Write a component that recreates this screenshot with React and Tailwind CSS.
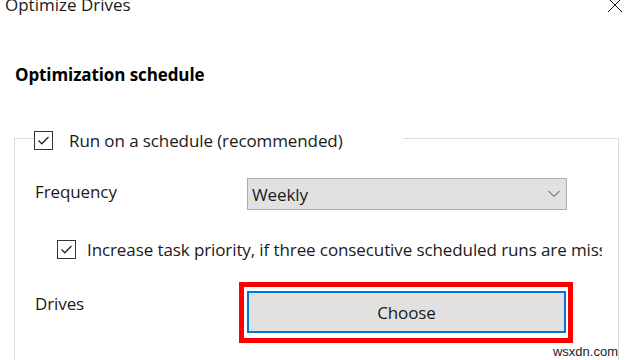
import React from "react";

function CheckBox() {
  return (
    <span className="w-[19px] h-[19px] border border-[#333333] bg-white flex items-center justify-center shrink-0">
      <svg width="15" height="15" viewBox="0 0 15 15" fill="none">
        <path d="M2.5 7.5 L5.8 10.8 L12.5 4" stroke="#222" strokeWidth="1.3" />
      </svg>
    </span>
  );
}

export default function App() {
  return (
    <div
      className="w-[629px] h-[360px] bg-white overflow-hidden relative text-[#1a1a1a]"
      style={{ fontFamily: '"Open Sans", "Noto Sans", sans-serif' }}
    >
      <div className="flex justify-between items-start h-[16px]">
        <span className="ml-[5px] -mt-[7px] text-[17px] leading-[23px]">Optimize Drives</span>
        <svg className="mr-[6px] -mt-[3px]" width="16" height="16" viewBox="0 0 16 16" fill="none">
          <path d="M1 1 L15 15 M15 1 L1 15" stroke="#111" strokeWidth="1" />
        </svg>
      </div>

      <h2 className="ml-[15px] mt-[47px] text-[17px] tracking-[-0.1px] leading-[24px] font-bold text-black">
        Optimization schedule
      </h2>

      <fieldset className="ml-[14px] mt-[39px] w-[605px] h-[300px] border border-[#dcdcdc] p-0 min-w-0">
        <legend className="ml-[19px] w-[369px] p-0 pt-[5px]">
          <div className="flex items-center h-[19px] gap-[16px]">
            <CheckBox />
            <span className="text-[17px] tracking-[-0.1px] leading-[23px]">Run on a schedule (recommended)</span>
          </div>
        </legend>

        <div className="pl-[20px] pt-[28px] text-[17px] tracking-[-0.1px]">
          <div className="flex items-center">
            <span className="w-[212px] leading-[23px] -mt-[6px]">Frequency</span>
            <div className="w-[320px] h-[32px] bg-[#e1e1e1] border border-[#adadad] flex items-center justify-between pl-[4px] pr-[6px]">
              <span className="leading-[23px]">Weekly</span>
              <svg width="12" height="8" viewBox="0 0 12 8" fill="none">
                <path d="M0.5 1 L6 6.5 L11.5 1" stroke="#444" strokeWidth="1" />
              </svg>
            </div>
          </div>

          <div className="flex items-center gap-[11px] ml-[22px] mt-[28px] whitespace-nowrap overflow-hidden w-[545px]">
            <CheckBox />
            <span className="leading-[23px]">
              Increase task priority, if three consecutive scheduled runs are missed
            </span>
          </div>

          <div className="flex items-center mt-[30px]">
            <span className="w-[212px] leading-[23px] -mt-[18px]">Drives</span>
            <div className="relative">
              <div className="absolute -left-[8px] -right-[7px] -top-[9px] -bottom-[10px] border-[5px] border-[#ff0000]" />
              <button className="w-[319px] h-[42px] bg-[#e1e1e1] border-2 border-[#0078d7] leading-[23px] text-[#1a1a1a] tracking-[-0.1px]">
                Choose
              </button>
            </div>
          </div>
        </div>
      </fieldset>

      <span
        className="absolute right-[11px] bottom-[1px] bg-white text-[13px] leading-[15px] text-[#222]"
        style={{ fontFamily: '"Liberation Sans", sans-serif' }}
      >
        wsxdn.com
      </span>
    </div>
  );
}
